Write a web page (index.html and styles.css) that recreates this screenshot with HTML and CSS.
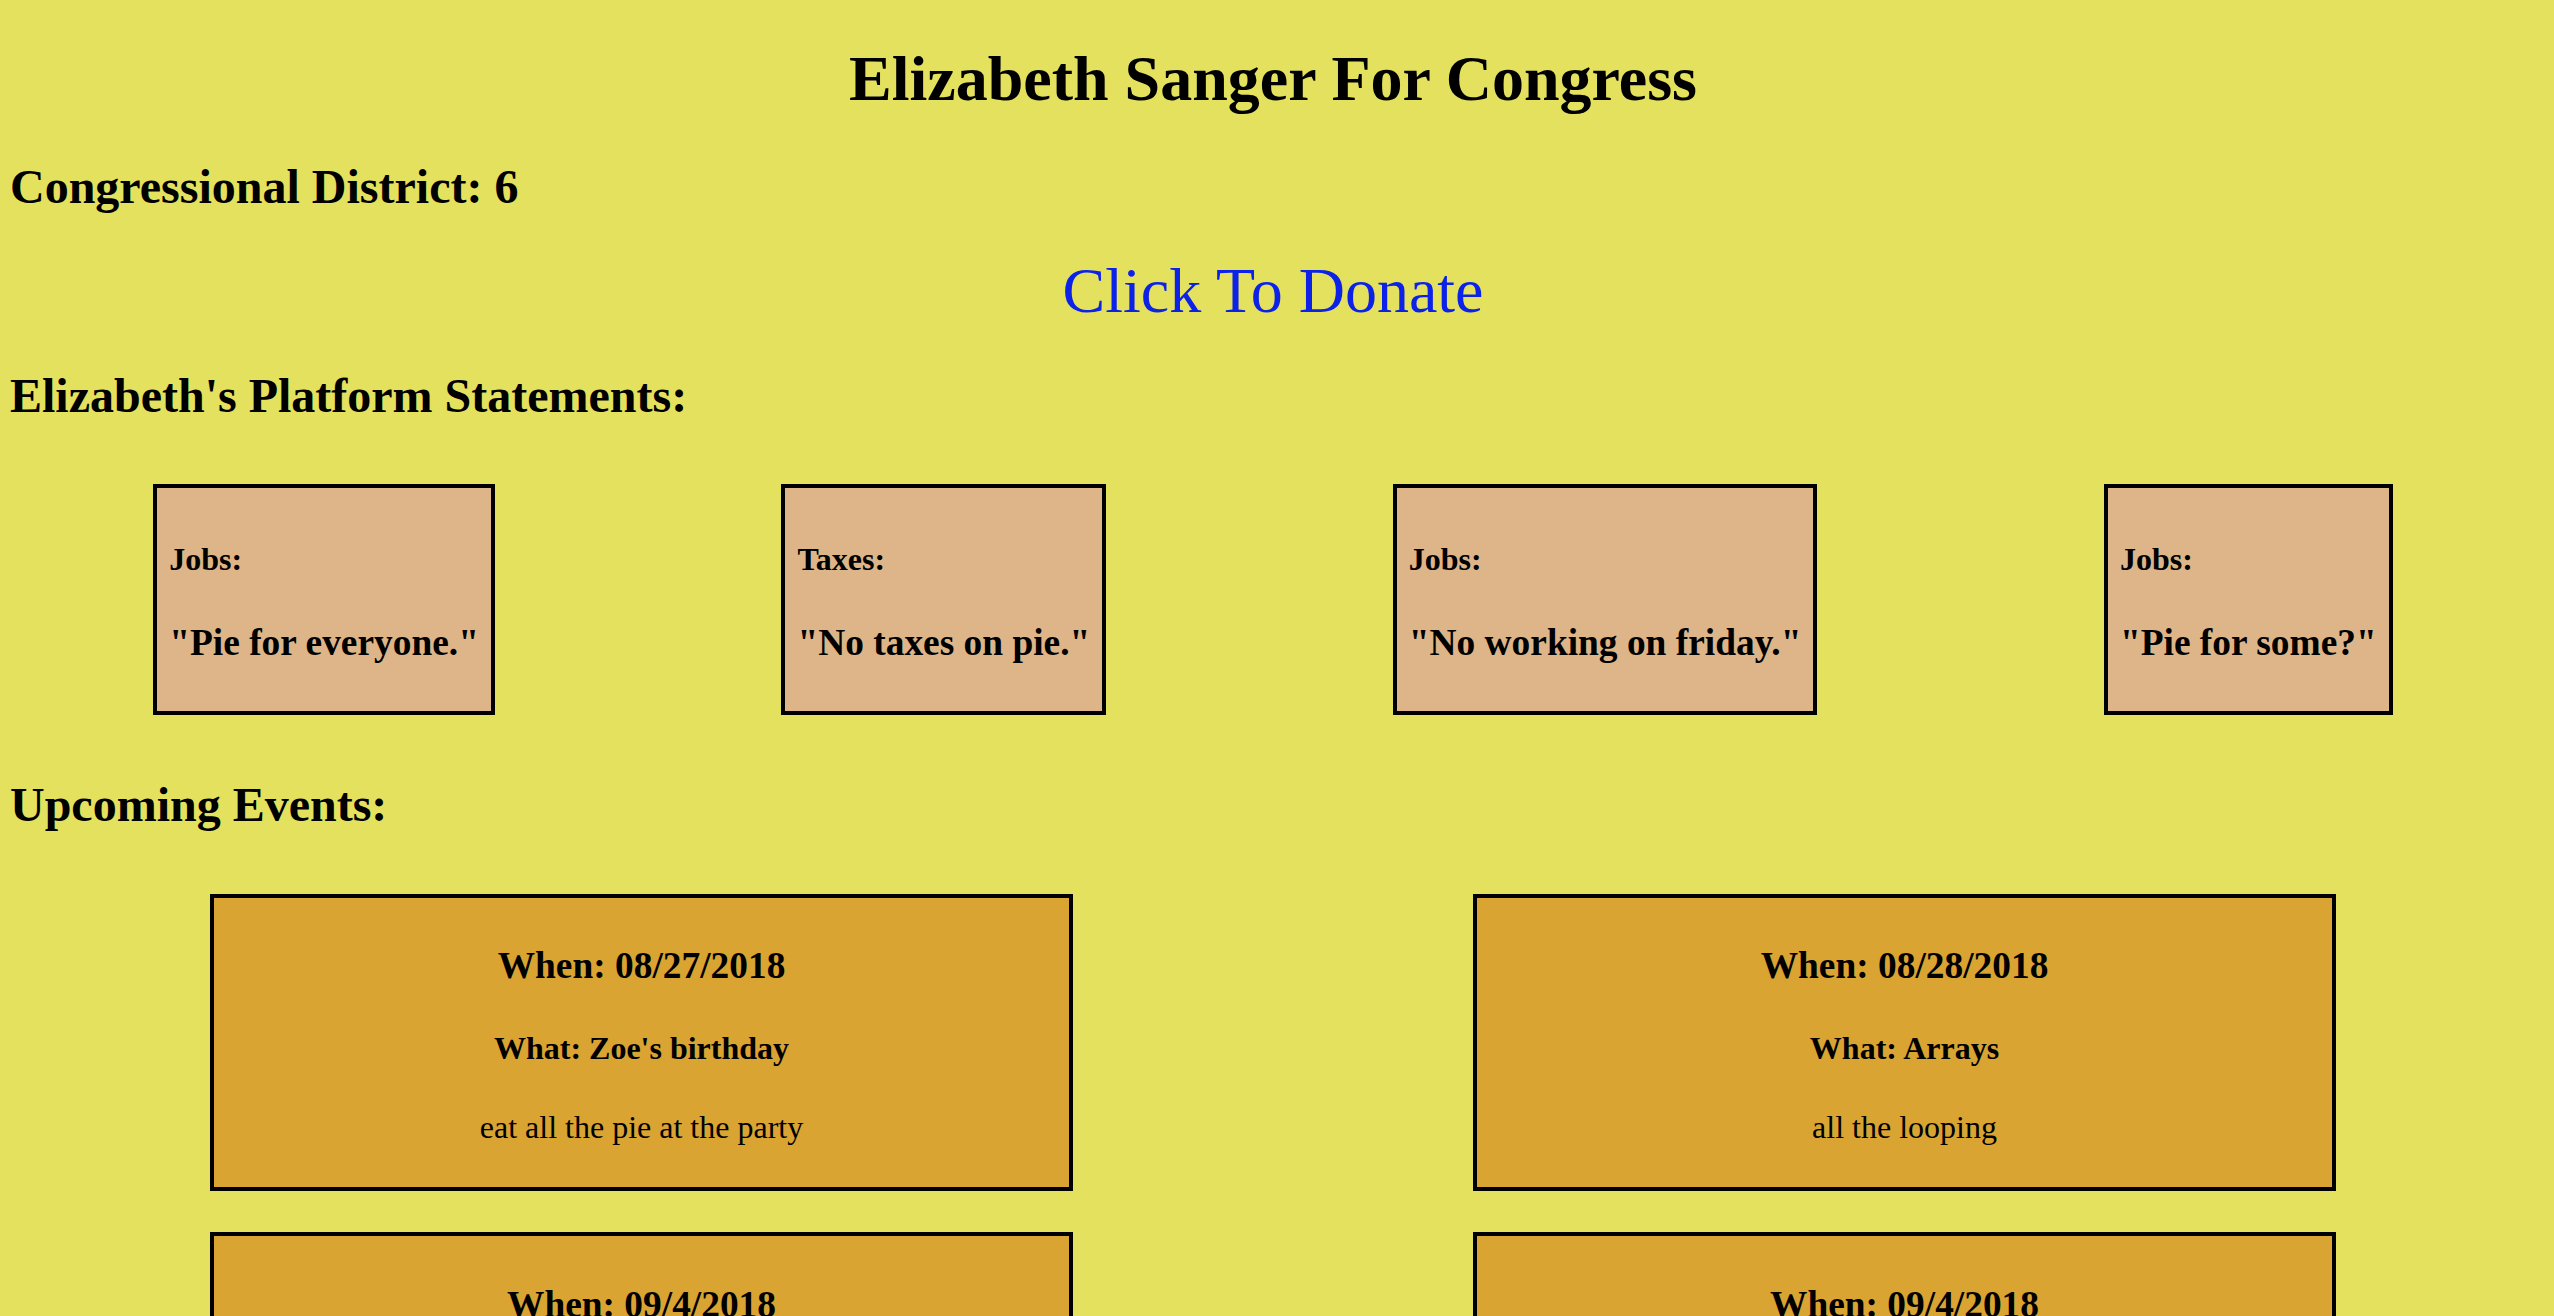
FILE: index.html
```html
<!DOCTYPE html>
<html lang="en">
<head>
<meta charset="utf-8">
<title>Elizabeth Sanger For Congress</title>
<link rel="stylesheet" href="styles.css">
</head>
<body>
<h1 class="title">Elizabeth Sanger For Congress</h1>
<h2 class="section-head">Congressional District: 6</h2>
<div class="donate"><a href="#" class="donate-link">Click To Donate</a></div>
<h2 class="section-head">Elizabeth's Platform Statements:</h2>
<div class="platforms">
  <div class="platform">
    <h4 class="platform-topic">Jobs:</h4>
    <h3 class="platform-quote">"Pie for everyone."</h3>
  </div>
  <div class="platform">
    <h4 class="platform-topic">Taxes:</h4>
    <h3 class="platform-quote">"No taxes on pie."</h3>
  </div>
  <div class="platform">
    <h4 class="platform-topic">Jobs:</h4>
    <h3 class="platform-quote">"No working on friday."</h3>
  </div>
  <div class="platform">
    <h4 class="platform-topic">Jobs:</h4>
    <h3 class="platform-quote">"Pie for some?"</h3>
  </div>
</div>
<h2 class="section-head">Upcoming Events:</h2>
<div class="events">
  <div class="event">
    <h3 class="event-when">When: 08/27/2018</h3>
    <h4 class="event-what">What: Zoe's birthday</h4>
    <p class="event-desc">eat all the pie at the party</p>
  </div>
  <div class="event">
    <h3 class="event-when">When: 08/28/2018</h3>
    <h4 class="event-what">What: Arrays</h4>
    <p class="event-desc">all the looping</p>
  </div>
  <div class="event">
    <h3 class="event-when">When: 09/4/2018</h3>
    <h4 class="event-what">What: Labor day</h4>
    <p class="event-desc">no working</p>
  </div>
  <div class="event">
    <h3 class="event-when">When: 09/4/2018</h3>
    <h4 class="event-what">What: Pie day</h4>
    <p class="event-desc">more pie</p>
  </div>
</div>
</body>
</html>
```

FILE: styles.css
```css
html {
  background: #e3e15e;
}

body {
  margin: 8px 18px 8px 10px;
  background: #e3e15e;
  color: #000;
  font-family: "Liberation Serif", "Times New Roman", serif;
  font-size: 32px;
}

.title {
  font-size: 64px;
  font-weight: bold;
  text-align: center;
  margin: 34px 0 43px;
}

.section-head {
  font-size: 48px;
  font-weight: bold;
  margin: 0.83em 0;
}

.donate {
  font-size: 64px;
  text-align: center;
  margin: 0;
}

.donate-link {
  color: #0c22e8;
  text-decoration: none;
}

.platforms {
  display: flex;
  justify-content: space-around;
  align-items: flex-start;
}

.platform {
  background: #ddb588;
  border: 4px solid #000;
  padding: 10px 12px;
  margin: 22px 0;
}

.platform-topic {
  font-size: 32px;
  font-weight: bold;
  margin: 1.33em 0;
}

.platform-quote {
  font-size: 37.4px;
  font-weight: bold;
  margin: 1em 0;
  white-space: nowrap;
}

.events {
  display: flex;
  flex-wrap: wrap;
  justify-content: space-around;
}

.event {
  box-sizing: border-box;
  width: 863px;
  background: #d9a431;
  border: 4px solid #000;
  padding: 9px 10px;
  margin: 22px 0 19px;
  text-align: center;
}

.event-when {
  font-size: 37.4px;
  font-weight: bold;
  margin: 1em 0;
}

.event-what {
  font-size: 32px;
  font-weight: bold;
  margin: 1.33em 0;
}

.event-desc {
  font-size: 32px;
  margin: 1em 0;
}
```
